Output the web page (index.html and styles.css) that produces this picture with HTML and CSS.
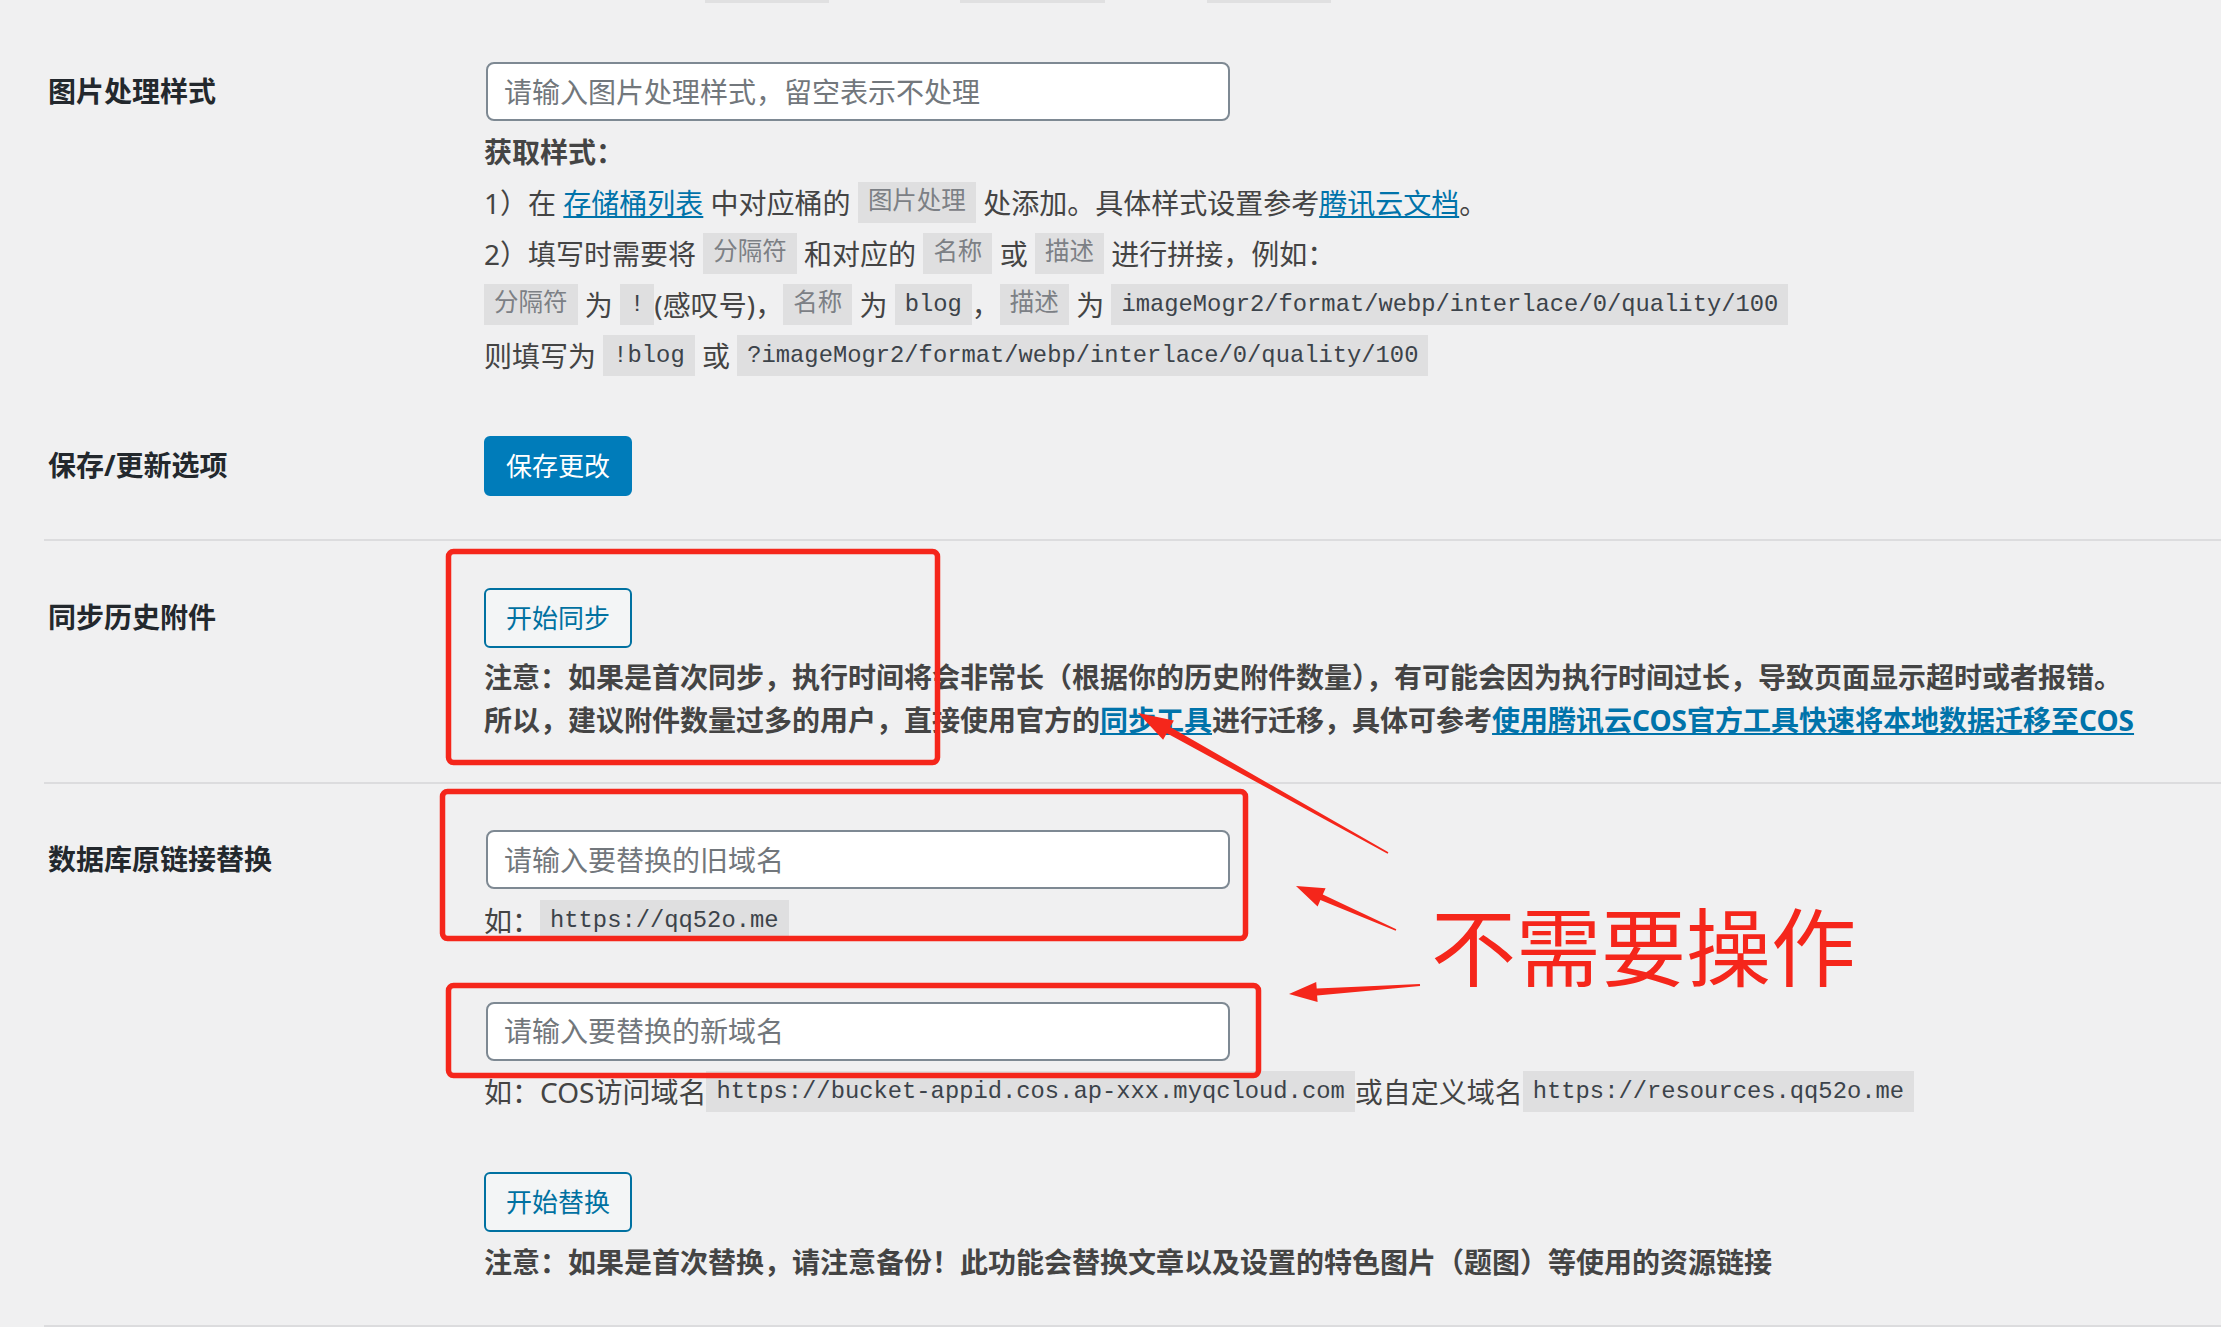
FILE: index.html
```html
<!DOCTYPE html>
<html>
<head>
    <meta charset="UTF-8">
    <title>腾讯云COS设置</title>
    <link rel="stylesheet" href="styles.css">
</head>
<body>

<div class="m-page">
    <div class="u-prev-line">
        <span class="stub stub-a"></span>
        <span class="stub stub-b"></span>
        <span class="stub stub-c"></span>
    </div>

    <div class="row row-first">
        <div class="row-label">图片处理样式</div>
        <div class="row-field">
            <input class="u-input" type="text" placeholder="请输入图片处理样式，留空表示不处理">
            <div class="desc">
                <div class="desc-title">获取样式：</div>
                <div>1）在 <a href="javascript:;">存储桶列表</a> 中对应桶的 <code class="cn">图片处理</code> 处添加。具体样式设置参考<a href="javascript:;">腾讯云文档</a>。</div>
                <div>2）填写时需要将 <code class="cn">分隔符</code> 和对应的 <code class="cn">名称</code> 或 <code class="cn">描述</code> 进行拼接，例如：</div>
                <div><code class="cn">分隔符</code> 为 <code>!</code>(感叹号)，<code class="cn">名称</code> 为 <code>blog</code>，<code class="cn">描述</code> 为 <code>imageMogr2/format/webp/interlace/0/quality/100</code></div>
                <div>则填写为 <code>!blog</code> 或 <code>?imageMogr2/format/webp/interlace/0/quality/100</code></div>
            </div>
        </div>
    </div>

    <div class="row">
        <div class="row-label">保存/更新选项</div>
        <div class="row-field">
            <a href="javascript:;" class="btn btn-primary">保存更改</a>
        </div>
    </div>

    <hr class="sep sep-1">

    <div class="row">
        <div class="row-label">同步历史附件</div>
        <div class="row-field">
            <a href="javascript:;" class="btn">开始同步</a>
            <p class="note">注意：如果是首次同步，执行时间将会非常长（根据你的历史附件数量），有可能会因为执行时间过长，导致页面显示超时或者报错。<br>所以，建议附件数量过多的用户，直接使用官方的<a href="javascript:;">同步工具</a>进行迁移，具体可参考<a href="javascript:;">使用腾讯云COS官方工具快速将本地数据迁移至COS</a></p>
        </div>
    </div>

    <hr class="sep sep-2">

    <div class="row">
        <div class="row-label">数据库原链接替换</div>
        <div class="row-field">
            <input class="u-input" type="text" placeholder="请输入要替换的旧域名">
            <div class="example">如：<code>https://qq52o.me</code></div>
            <input class="u-input u-input-new" type="text" placeholder="请输入要替换的新域名">
            <div class="example">如：COS访问域名<code>https://bucket-appid.cos.ap-xxx.myqcloud.com</code>或自定义域名<code>https://resources.qq52o.me</code></div>
            <a href="javascript:;" class="btn btn-replace">开始替换</a>
            <p class="note note-last">注意：如果是首次替换，请注意备份！此功能会替换文章以及设置的特色图片（题图）等使用的资源链接</p>
        </div>
    </div>

    <hr class="sep sep-3">
</div>

<!-- red marks drawn over the screenshot -->
<svg class="marks" width="2221" height="1327" viewBox="0 0 2221 1327">
    <g fill="none" stroke="#f5261b" stroke-width="5.5">
        <rect x="448.5" y="551.5" width="489" height="211" rx="5"/>
        <rect x="442.5" y="791.5" width="803" height="147" rx="5"/>
        <rect x="448.5" y="985.5" width="810" height="90" rx="5"/>
    </g>
    <g fill="#f5261b">
        <polygon points="1388.4,852.3 1170.2,727 1173.9,720.5 1138,713 1163.1,739.7 1166.8,733.2 1387.6,853.7"/>
        <polygon points="1396.3,929.3 1322.8,894.6 1325.6,888.2 1296,886 1317.6,906.5 1320.4,900 1395.7,930.7"/>
        <polygon points="1419.9,984 1316.7,988.6 1316.2,982.1 1289,994 1317.6,1002.1 1317.1,995.6 1420.1,986"/>
    </g>
</svg>
<div class="mark-text">不需要操作</div>

</body>
</html>
```

FILE: styles.css
```css
*{ margin: 0; padding: 0; box-sizing: border-box;}
body {position: relative;width: 2221px;height: 1327px;overflow: hidden;background: #f0f0f1;color: #444;font-family: "Noto Sans", "Noto Sans CJK SC", sans-serif;font-size: 28px;}
a {color: #0073aa;text-decoration: underline;}

.m-page {padding-left: 44px;}
.u-prev-line {display: flex;height: 3px;padding-left: 661px;}
.stub {display: block;height: 3px;background: #e0e0e1;}
.stub-a {width: 124px;}
.stub-b {width: 145px;margin-left: 131px;}
.stub-c {width: 124px;margin-left: 102px;}

.row {display: flex;padding-left: 4px;}
.row-first {margin-top: 29px;}
.row-first .row-field {padding-bottom: 24px;}
.row-label {width: 436px;flex-shrink: 0;padding-top: 41px;color: #23282d;font-weight: bold;line-height: 36px;}
.row-field {flex: 1;padding: 30px 0;}

.u-input {display: block;width: 744px;height: 59px;margin-left: 2px;padding: 0 16px;border: 2px solid #7e8993;border-radius: 8px;background: #fff;color: #32373c;font-family: inherit;font-size: 28px;outline: none;}
.u-input::placeholder {color: #72777c;}
.u-input-new {margin-top: 55px;}

.desc {margin-top: 5.5px;line-height: 51px;}
.desc-title {font-weight: bold;}

code {padding: 7px 10px;background: rgba(0,0,0,.07);color: #3c434a;font-family: "Liberation Mono", "Noto Sans CJK SC", monospace;font-size: 23.8px;line-height: 1;vertical-align: 5px;}
code.cn {font-size: 24.5px;color: #7c8085;}

.example {margin-top: 6.5px;line-height: 51px;}
.u-input-new + .example {margin-top: 6px;}

.btn {display: inline-block;height: 60px;padding: 0 20px;border: 2px solid #0071a1;border-radius: 6px;background: #f3f5f6;color: #0071a1;font-size: 26px;line-height: 56px;text-decoration: none;vertical-align: top;}
.btn-primary {background: #007cba;border-color: #007cba;color: #fff;}
.btn-replace {margin-top: 54.5px;}

.note {margin-top: 7.5px;font-weight: bold;line-height: 43px;}
.note-last {margin-top: 8.5px;}

.sep {border: 0;height: 2px;background: #dcdcde;margin-left: 0;}
.sep-1 {margin: 13.5px 0 17px;}
.sep-2 {margin: 10.5px 0 16px;}
.sep-3 {margin: 11.5px 0 0;}

.marks {position: absolute;left: 0;top: 0;pointer-events: none;}
.mark-text {position: absolute;left: 1431px;top: 900px;color: #f5261b;font-family: "Noto Sans CJK SC", sans-serif;font-size: 85px;line-height: 1;white-space: nowrap;}
```
